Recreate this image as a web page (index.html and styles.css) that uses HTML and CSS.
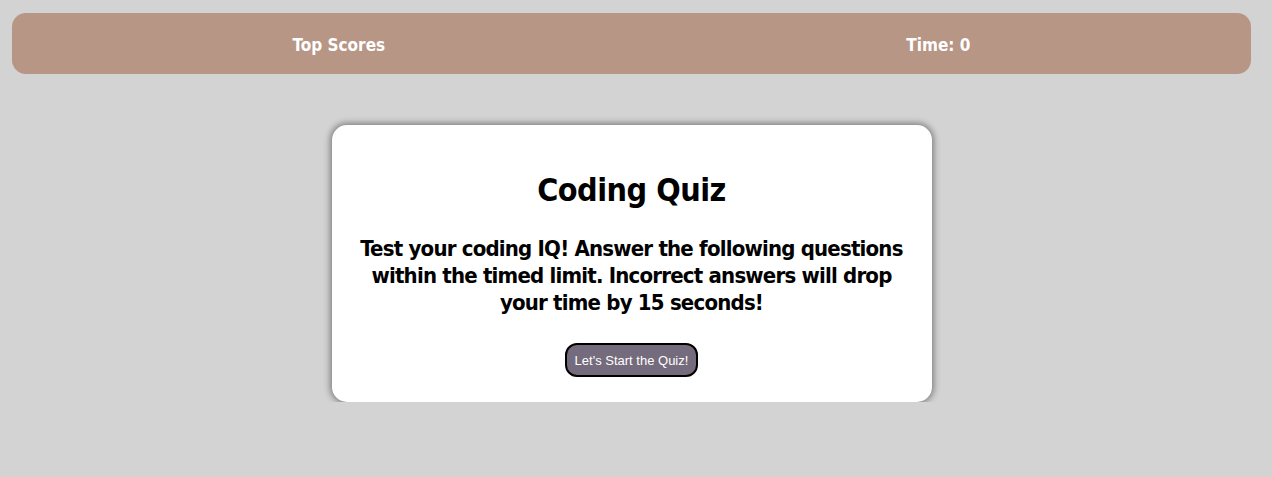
FILE: index.html
```html
<!DOCTYPE html>
<html>
<head>
<meta charset="utf-8">
<link rel="stylesheet" href="styles.css">
</head>
<body>
<header class="topbar">
  <a class="topbar-item">Top Scores</a>
  <span class="topbar-item">Time: 0</span>
</header>
<main class="quiz-card">
  <h1 class="quiz-title">Coding Quiz</h1>
  <p class="quiz-intro">Test your coding IQ! Answer the following questions within the timed limit. Incorrect answers will drop your time by 15 seconds!</p>
  <button class="start-btn">Let's Start the Quiz!</button>
</main>
</body>
</html>
```

FILE: styles.css
```css
html, body {
  margin: 0;
  padding: 0;
}
body {
  background: #d3d3d3;
  font-family: "DejaVu Sans Condensed", "Liberation Sans", sans-serif;
  padding: 13px 21px 0 12px;
}
.topbar {
  background: #b79686;
  border-radius: 14px;
  height: 61px;
  display: flex;
  align-items: center;
  justify-content: space-around;
  padding: 0 20px 0 20px;
}
.topbar-item {
  color: #fff;
  font-weight: bold;
  font-size: 17px;
  padding-top: 2px;
}
.quiz-card {
  width: 600px;
  margin: 51px auto 0;
  box-sizing: border-box;
  background: #fff;
  border-radius: 15px;
  box-shadow: 0 0 6px 2px #808080;
  padding: 46px 14px 25px;
  text-align: center;
}
.quiz-title {
  margin: 0;
  font-size: 32px;
  line-height: 38px;
  font-weight: bold;
  letter-spacing: -0.5px;
}
.quiz-intro {
  margin: 26px 0 0;
  font-size: 22px;
  line-height: 27px;
  font-weight: bold;
  letter-spacing: -0.8px;
}
.start-btn {
  margin-top: 27px;
  background: #746b7c;
  color: #fff;
  border: 2px solid #000;
  border-radius: 12px;
  font-family: Arial, "Liberation Sans", sans-serif;
  font-size: 13px;
  height: 34px;
  padding: 0 8px;
}
```
